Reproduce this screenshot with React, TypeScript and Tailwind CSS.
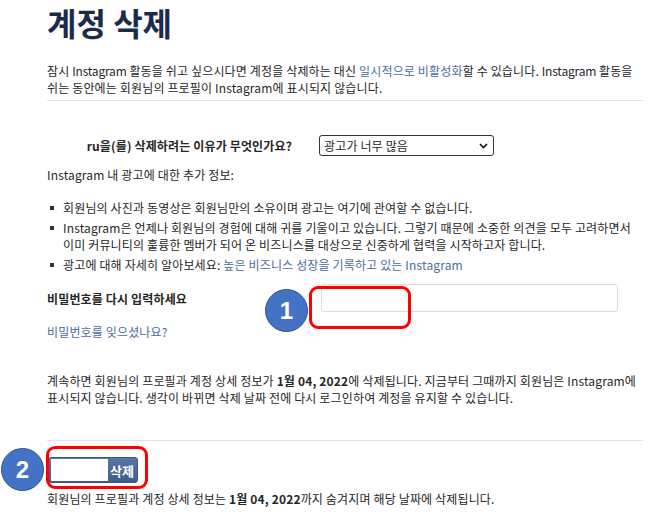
import React from "react";

const font = { fontFamily: '"Noto Sans CJK KR", "Noto Sans", sans-serif' };

function Bullet({ children }: { children: React.ReactNode }) {
  return (
    <li className="flex mb-[3px]">
      <span className="w-[16px] shrink-0 flex pt-[7px] pl-[3px]">
        <span className="block w-[4px] h-[4px] bg-[#333]" />
      </span>
      <span className="whitespace-nowrap">{children}</span>
    </li>
  );
}

function Marker({ n }: { n: string }) {
  return (
    <div
      className="w-[43px] h-[43px] rounded-full bg-[#4472c4] border-[1.5px] border-[#2f528f] flex items-center justify-center text-white text-[24px] font-bold"
      style={{ fontFamily: '"Liberation Sans", Arial, sans-serif' }}
    >
      {n}
    </div>
  );
}

export default function App() {
  return (
    <div className="relative w-[660px] h-[528px] bg-white overflow-hidden text-[#262626]" style={font}>
      <div className="pl-[47px] pr-[17px] text-[12px] leading-[17px] tracking-[0.15px]">
        <h1 className="h-[44px] text-[32px] leading-[44px] font-bold text-[#1c2b4b] tracking-normal">계정 삭제</h1>
        <p className="mt-[18px] whitespace-nowrap">
          잠시 <span className="tracking-[-0.2px]">Instagram</span> 활동을 쉬고 싶으시다면 계정을 삭제하는 대신{" "}
          <span className="text-[#4b6b9e]">일시적으로 비활성화</span>할 수 있습니다.{" "}
          <span className="tracking-[-0.2px]">Instagram</span> 활동을
          <br />
          쉬는 동안에는 회원님의 프로필이 Instagram에 표시되지 않습니다.
        </p>
        <div className="mt-[4px] h-px bg-[#e3e3e3]" />

        <div className="mt-[34px] flex items-center h-[21px]">
          <div className="w-[245px] text-right font-bold whitespace-nowrap">ru을(를) 삭제하려는 이유가 무엇인가요?</div>
          <div className="ml-[27px] w-[175px] h-[21px] border border-[#333] rounded-[3px] flex items-center justify-between pl-[4px] pr-[5px]">
            <span className="whitespace-nowrap">광고가 너무 많음</span>
            <svg width="9" height="6" viewBox="0 0 9 6">
              <path d="M1 1 L4.5 4.5 L8 1" fill="none" stroke="#111" strokeWidth="1.6" />
            </svg>
          </div>
        </div>

        <p className="mt-[10px] whitespace-nowrap">Instagram 내 광고에 대한 추가 정보:</p>

        <ul className="mt-[16px]">
          <Bullet>회원님의 사진과 동영상은 회원님만의 소유이며 광고는 여기에 관여할 수 없습니다.</Bullet>
          <Bullet>
            Instagram은 언제나 회원님의 경험에 대해 귀를 기울이고 있습니다. 그렇기 때문에 소중한 의견을 모두 고려하면서
            <br />
            이미 커뮤니티의 훌륭한 멤버가 되어 온 비즈니스를 대상으로 신중하게 협력을 시작하고자 합니다.
          </Bullet>
          <Bullet>
            광고에 대해 자세히 알아보세요: <span className="text-[#4b6b9e]">높은 비즈니스 성장을 기록하고 있는 Instagram</span>
          </Bullet>
        </ul>

        <div className="mt-[11px] flex items-center">
          <div className="w-[274px] font-bold whitespace-nowrap">비밀번호를 다시 입력하세요</div>
          <div className="w-[297px] h-[28px] border border-[#dbdbdb] rounded-[3px] bg-white" />
        </div>

        <p className="mt-[11px] text-[#4b6b9e] whitespace-nowrap">비밀번호를 잊으셨나요?</p>

        <p className="mt-[32px] whitespace-nowrap">
          계속하면 회원님의 프로필과 계정 상세 정보가 <b>1월 04, 2022</b>에 삭제됩니다. 지금부터 그때까지 회원님은 Instagram에
          <br />
          표시되지 않습니다. 생각이 바뀌면 삭제 날짜 전에 다시 로그인하여 계정을 유지할 수 있습니다.
        </p>

        <div className="mt-[34px] h-px bg-[#e3e3e3]" />

        <div className="mt-[16px] flex">
          <div className="ml-[1px] h-[26px] w-[90px] rounded-[3px] border border-[#3d5785] bg-gradient-to-b from-[#5b77a3] to-[#3f5d8a] flex items-center pl-[2px]">
            <div className="w-[57px] h-[22px] bg-white" />
            <span className="ml-[2px] text-white font-bold text-[13px] tracking-normal">삭제</span>
          </div>
        </div>

        <p className="mt-[7px] whitespace-nowrap">
          회원님의 프로필과 계정 상세 정보는 <b>1월 04, 2022</b>까지 숨겨지며 해당 날짜에 삭제됩니다.
        </p>
      </div>

      {/* annotations */}
      <div className="absolute left-[309px] top-[286px] w-[102px] h-[43px] border-[3px] border-[#ff0000] rounded-[9px]" />
      <div className="absolute left-[265px] top-[289px]">
        <Marker n="1" />
      </div>
      <div className="absolute left-[46px] top-[446px] w-[102px] h-[43px] border-[3px] border-[#ff0000] rounded-[9px]" />
      <div className="absolute left-[1px] top-[448px]">
        <Marker n="2" />
      </div>
    </div>
  );
}
